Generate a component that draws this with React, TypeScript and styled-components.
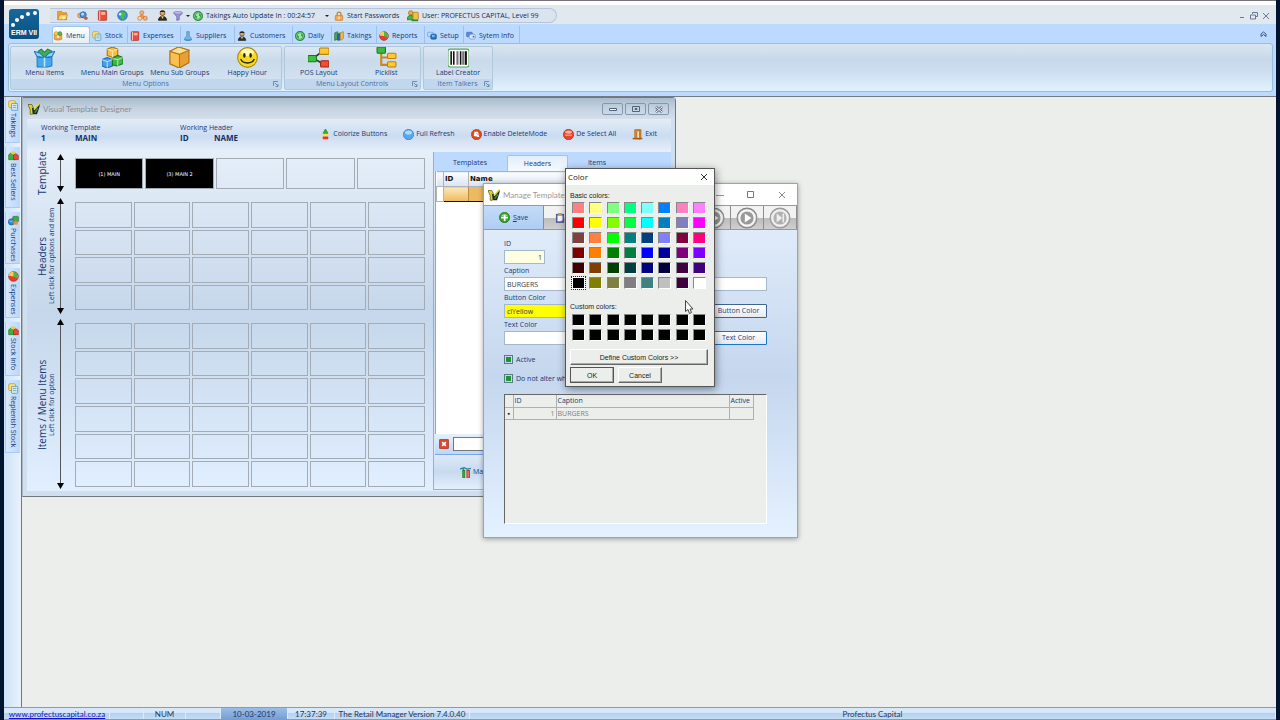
import React from 'react';
import styled, { createGlobalStyle, css } from 'styled-components';

const ui = '"Open Sans", "Noto Sans", sans-serif';
const titleFont = 'Lato, "Open Sans", sans-serif';
const dialogFont = '"Liberation Sans", Arial, sans-serif';
const navy = '#193872';

const Global = createGlobalStyle`
  *, *::before, *::after { box-sizing: border-box; }
  body { margin: 0; font: 7px/10px ${ui}; color: ${navy}; background: #eceeeb; }
  button, input { font: inherit; color: inherit; margin: 0; padding: 0; border-radius: 0; }
  button { background: none; border: 0; white-space: nowrap; }
  h1, h2, p { margin: 0; font: inherit; }
`;

/* ---------- Icons ---------- */

type IconName =
  | 'folder' | 'gears' | 'book' | 'globe' | 'people' | 'person' | 'funnel' | 'dollar' | 'lock' | 'users'
  | 'menu' | 'stock' | 'supplier' | 'takings' | 'pie' | 'setup' | 'info' | 'box' | 'cubes' | 'cube'
  | 'smile' | 'layout' | 'tree' | 'barcode' | 'sellers' | 'coins' | 'pen' | 'bottle' | 'refresh'
  | 'delete' | 'deselect' | 'exit' | 'cancel' | 'manage' | 'save' | 'clipboard' | 'play' | 'last';

const Svg = styled.svg`
  display: block;
  flex: none;
`;

const drawings: Record<IconName, React.ReactNode> = {
  folder: <><path d="M1 2h6l2 2h5v10H1z" fill="#f0a030" stroke="#c87a20" /><path d="M4 7h11l-2 7H1z" fill="#ffd870" stroke="#c88828" /><path d="M7 9l5 1-2 4" fill="#fff4d0" /></>,
  gears: <><circle cx="4.500" cy="8" r="3.500" fill="#f0a868" stroke="#b87840" /><circle cx="9" cy="7" r="4.500" fill="#4d8fd8" stroke="#235a9c" /><circle cx="8" cy="6" r="2" fill="#b9dcff" /><circle cx="13" cy="12" r="2.500" fill="#c8583c" /></>,
  book: <><rect x="2" y="1" width="12" height="14" rx="1" fill="#e8503c" stroke="#a82818" /><rect x="6" y="3" width="6" height="4" fill="#ffb0a0" /><path d="M4 1v14" stroke="#ffc8b8" strokeWidth="1.500" /></>,
  globe: <><circle cx="8" cy="8" r="7" fill="#3a8ce0" stroke="#205a9c" /><path d="M6 2l5 1 2 3-3 3 1 4-3 1-3-5-2-2zM12 8l2 0-2 4z" fill="#46c048" /><circle cx="4.500" cy="6" r="2" fill="#c0e8ff" /></>,
  people: <><circle cx="7" cy="4" r="3" fill="#f4b070" stroke="#c87838" /><path d="M3 12c0-6 8-6 8 0z" fill="#f09850" stroke="#c87030" /><circle cx="4" cy="12" r="3" fill="#ffd0a0" stroke="#c87838" /><circle cx="12" cy="12" r="3" fill="#f8b070" stroke="#c87030" /></>,
  person: <><circle cx="8" cy="4.500" r="3.500" fill="#e0a860" stroke="#4a3018" /><path d="M2 15c0-8 12-8 12 0z" fill="#303030" stroke="#181818" /><path d="M6 9l2 4 2-4" fill="#f4c830" /><path d="M4 3c1-3 7-3 8 0z" fill="#2a2018" /></>,
  funnel: <><path d="M1 3h14l-5 6v5l-4 1V9z" fill="#9f95d8" stroke="#6055a8" /><ellipse cx="8" cy="3" rx="7" ry="2" fill="#d0c8f4" stroke="#6055a8" /></>,
  dollar: <><circle cx="8" cy="8" r="7.500" fill="#28a038" stroke="#12702a" /><circle cx="8" cy="8" r="5.500" fill="none" stroke="#a0e8a8" /><path d="M10 5H7a1.500 1.500 0 0 0 0 3h2a1.500 1.500 0 0 1 0 3H6M8 4v8" stroke="#fff" strokeWidth="1.200" fill="none" /></>,
  lock: <><path d="M5 8V4c0-3 6-3 6 0v4" fill="none" stroke="#c08030" strokeWidth="2" /><rect x="2" y="7" width="12" height="8" rx="1" fill="#f4a850" stroke="#c07828" /><path d="M8 9v4" stroke="#fff0c0" strokeWidth="2" /></>,
  users: <><circle cx="5" cy="4" r="3" fill="#f0b040" stroke="#a06818" /><path d="M0 13c0-8 10-8 10 0z" fill="#48b048" stroke="#207028" /><rect x="8" y="3" width="7" height="10" rx="1" fill="#f4c040" stroke="#b07818" /><path d="M6 14h9" stroke="#308838" strokeWidth="2" /></>,
  menu: <><path d="M2 5h12v8c-3 2-9 2-12 0z" fill="#f4a840" stroke="#c07820" /><circle cx="5" cy="4" r="3" fill="#f8d060" stroke="#c08820" /><circle cx="11" cy="4" r="3" fill="#68b848" stroke="#307820" /><circle cx="8" cy="9" r="2" fill="#fff0b0" /></>,
  stock: <><rect x="1" y="1" width="10" height="10" rx="2" fill="#ffe070" stroke="#b89828" /><rect x="5" y="5" width="9" height="10" rx="1" fill="#d0e8f8" stroke="#4888b8" /><path d="M7 8h5M7 11h5" stroke="#58a858" /></>,
  supplier: <><path d="M6 1h4v7l3 3v3H3v-3l3-3z" fill="#74b4e0" stroke="#3c80b8" /><path d="M2 13c4 3 8 3 12 0" fill="none" stroke="#4a90c8" strokeWidth="2" /></>,
  takings: <><path d="M1 3l5-2v12l-5 2z" fill="#48a848" stroke="#286828" /><path d="M6 5l4-2v11l-4 1z" fill="#2868c8" stroke="#183c88" /><path d="M10 3l5-2v11l-5 3z" fill="#f0c030" stroke="#a87818" /></>,
  pie: <><circle cx="8" cy="8" r="7" fill="#e84028" stroke="#a02818" /><path d="M8 8V1a7 7 0 0 1 6 10z" fill="#50b848" /><path d="M8 8V1a7 7 0 0 0-7 6z" fill="#ffd050" /></>,
  setup: <><rect x="1" y="2" width="9" height="7" rx="1" fill="#b8dcf8" stroke="#5898d0" /><rect x="6" y="5" width="9" height="8" rx="2" fill="#2878d0" stroke="#184c98" /><path d="M8 8h4" stroke="#b8e0ff" strokeWidth="2" /></>,
  info: <><rect x="1" y="2" width="9" height="7" rx="1" fill="#5090e0" stroke="#3868b0" /><rect x="5" y="5" width="10" height="8" rx="3" fill="#dce8fc" stroke="#6888c0" /><circle cx="12" cy="9" r="1.500" fill="#3868b0" /></>,
  box: <><path d="M3 9h14v9l-4 1H3z" fill="#48a8ec" stroke="#1c78c0" /><path d="M4 4l3-2 3 3 3-3 4 2-2 6H5z" fill="#40b048" stroke="#208040" /><path d="M3 9L0 4l6 2 4 4zM17 9l3-5-6 2-4 4z" fill="#90d0fa" stroke="#1c78c0" /><path d="M10 10v9" stroke="#b8e4ff" strokeWidth="1.500" /></>,
  cubes: <><path d="M5 2l5-2 5 2v6l-5 2-5-2z" fill="#f8c040" stroke="#a87010" /><path d="M0 12l5-2 5 2v6l-5 2-5-2z" fill="#48a0e8" stroke="#1860a8" /><path d="M10 11l5-3 5 2v6l-6 2-4-1z" fill="#40b840" stroke="#187828" /><path d="M5 2l5 2 5-2M10 4v6M0 12l5 2 5-2M5 14v6M10 11l5 1 5-2M15 12v6" stroke="#fff" opacity=".6" fill="none" /></>,
  cube: <><path d="M1 4l8-4 10 3v12l-9 5-9-4z" fill="#e8a030" stroke="#a86c10" /><path d="M1 4l9 3v13l-9-4z" fill="#f8c050" stroke="#b87818" /><path d="M1 4l8-4 10 3-9 4z" fill="#ffe090" stroke="#b87818" /></>,
  smile: <><circle cx="10" cy="10" r="9.400" fill="#f8d820" stroke="#a88810" /><ellipse cx="10" cy="5" rx="6" ry="3.500" fill="#fff8b0" /><ellipse cx="7" cy="8" rx="1.200" ry="2.200" fill="#222" /><ellipse cx="13" cy="8" rx="1.200" ry="2.200" fill="#222" /><path d="M3.500 11.500c2 5 11 5 13 0" fill="none" stroke="#222" strokeWidth="1.300" /></>,
  layout: <><path d="M6 10L14 4M6 11l8 5" stroke="#303030" strokeWidth="1.500" /><rect x="0" y="8" width="8" height="6" rx="1" fill="#40c040" stroke="#187818" /><rect x="11" y="1" width="9" height="6" rx="1" fill="#ffc830" stroke="#b88010" /><rect x="12" y="13" width="8" height="6" rx="1" fill="#f05030" stroke="#a02010" /></>,
  tree: <><path d="M5 5v12h7M5 10h7" stroke="#c88820" strokeWidth="2" fill="none" /><rect x="1" y="0" width="8" height="6" rx="1" fill="#40b840" stroke="#187818" /><rect x="11" y="6" width="8" height="5" rx="1" fill="#ffc830" stroke="#b88010" /><rect x="11" y="14" width="8" height="5" rx="1" fill="#ffc830" stroke="#b88010" /></>,
  barcode: <><rect x="0" y="2" width="20" height="17" rx="2" fill="#fff" stroke="#50a858" /><path d="M3 4v13M5.500 4v13M12 4v13" stroke="#111" strokeWidth="1.500" /><path d="M9 4v13M14.500 4v13" stroke="#777" strokeWidth="2" /><path d="M17 4v13" stroke="#111" strokeWidth="2" /></>,
  sellers: <><path d="M1 7l5-4 5 4v7H1z" fill="#40b040" stroke="#208028" /><path d="M8 8l3-3 4 3v6H8z" fill="#e84830" stroke="#a82818" /><rect x="4" y="2" width="7" height="4" rx="2" fill="#f4c848" /></>,
  coins: <><circle cx="5" cy="10" r="4.500" fill="#3888d8" stroke="#205898" /><rect x="7" y="2" width="8" height="8" rx="1" fill="#48a848" stroke="#287028" /><path d="M8 9h6v5H8z" fill="#f08840" /><path d="M2 9h5" stroke="#b8dcff" /></>,
  pen: <><path d="M0 2h5l2 4-1 9H3V9z" fill="#e6d61c" stroke="#5c5810" /><path d="M5 6l4 2 4-5 3-2-1 5-3 9H7z" fill="#1e2620" /><path d="M15 1L8 9" stroke="#e8dc30" strokeWidth="2" /><path d="M13 7l-4 6" stroke="#3e8a50" strokeWidth="2" /></>,
  bottle: <><path d="M8 0l3 5v3H5V5z" fill="#30b030" stroke="#208020" /><rect x="4" y="7" width="8" height="4" fill="#ffe040" /><rect x="4" y="11" width="8" height="4" rx="1" fill="#e83820" /></>,
  refresh: <><circle cx="8" cy="8" r="7.500" fill="#58a8f0" stroke="#3478c0" /><ellipse cx="8" cy="5" rx="5" ry="3" fill="#b0dcff" /></>,
  delete: <><circle cx="8" cy="8" r="7.500" fill="#e04820" stroke="#a02c10" strokeDasharray="3 1" /><path d="M5 4l5 0 1 3 1 5-4-1-4-1z" fill="#fff" /><path d="M8 6l3 3" stroke="#e04820" /></>,
  deselect: <><circle cx="8" cy="8" r="7.500" fill="#e84430" stroke="#a82c18" /><ellipse cx="8" cy="4.500" rx="5" ry="2.500" fill="#ffb098" /><path d="M3 9h10" stroke="#ff9880" strokeWidth="2" /></>,
  exit: <><path d="M4 1h9v13H4z" fill="#e89038" stroke="#a05818" /><path d="M7 3l4-1v13l-4-2z" fill="#ffe0a0" stroke="#a05818" /><path d="M1 14h14" stroke="#a05818" strokeWidth="2" /></>,
  cancel: <><rect x=".5" y=".5" width="15" height="15" rx="2" fill="#d84830" stroke="#982818" /><path d="M5 5l6 6M11 5l-6 6" stroke="#fff" strokeWidth="2.500" /></>,
  manage: <><path d="M0 3l6-2 4 2 6-1M5 2v4M12 2v4" stroke="#2888a8" strokeWidth="2" fill="none" /><rect x="4" y="5" width="3" height="11" fill="#38b038" stroke="#187818" /><rect x="10" y="5" width="4" height="11" fill="#e07060" stroke="#a02818" /></>,
  save: <><circle cx="8" cy="8" r="7.500" fill="#38a030" stroke="#207020" /><path d="M3 6c2-4 8-4 10 0" fill="#90d878" /><path d="M7 4h2.500v3H13v2.500H9.500V13H7V9.500H3V7h4z" fill="#fff" /></>,
  clipboard: <><rect x="2" y="2" width="12" height="13" fill="#6068c0" stroke="#383c88" /><path d="M4 4h8v7l-3 2H4z" fill="#f8f8ff" /><rect x="5" y="0" width="6" height="4" fill="#c8a050" /></>,
  play: <><circle cx="10" cy="10" r="9" fill="#b2b2b2" stroke="#888" /><circle cx="10" cy="10" r="7" fill="#999" stroke="#f6f6f6" strokeWidth="2" /><path d="M8 6l6 4-6 4z" fill="#fff" /></>,
  last: <><circle cx="10" cy="10" r="9" fill="#bcbcbc" stroke="#999" /><circle cx="10" cy="10" r="7" fill="#b0b0b0" stroke="#f0f0f0" strokeWidth="2" /><path d="M7 6l5 4-5 4z" fill="#eee" /><path d="M13 6v8" stroke="#eee" strokeWidth="1.500" /></>,
};

const largeIcons: IconName[] = ['box', 'cubes', 'cube', 'smile', 'layout', 'tree', 'barcode', 'play', 'last'];

function Icon({ name, size = 10 }: { name: IconName; size?: number }) {
  const box = largeIcons.includes(name) ? 20 : 16;
  return (
    <Svg width={size} height={size} viewBox={`0 0 ${box} ${box}`} fill="none" aria-hidden="true">
      {drawings[name]}
    </Svg>
  );
}

const Caret = () => (
  <Svg width="4" height="2" viewBox="0 0 4 2" aria-hidden="true"><path d="M0 0h4L2 2z" fill="#222" /></Svg>
);

/* ---------- Frame ---------- */

const Frame = styled.div`
  min-height: 100vh;
  display: flex;
  flex-direction: column;
  border: solid #00142f;
  border-width: 0 4px 0 4px;
`;

const TopEdge = styled.div`
  height: 5px;
  background: #fff;
  border-top: 1px solid #77737a;
`;

const Header = styled.header`
  display: grid;
  grid-template-columns: 46px minmax(0, 1fr);
  grid-template-rows: 19px 19px;
  background: linear-gradient(#e1e9ee 0 19px, #bcd9ff 19px);
`;

const Logo = styled.div`
  grid-row: 1 / 3;
  align-self: center;
  margin: 0 0 0 5px;
  width: 30px;
  height: 30px;
  border-radius: 3px;
  background: linear-gradient(#17689c, #075181);
  color: #fff;
  font: bold 7px/8px ${dialogFont};
  text-align: center;
  white-space: nowrap;
  svg { width: 30px; height: 20px; }
`;

const QuickBar = styled.div`
  display: flex;
  align-items: center;
  justify-content: space-between;
  padding: 2px 6px 0 0;
`;

const Pill = styled.div`
  display: flex;
  align-items: center;
  height: 15px;
  width: 507px;
  padding-left: 7px;
  border: 1px solid #b4c6dc;
  border-left: 0;
  border-radius: 0 8px 8px 0;
  background: #d9e4ef;
  color: #172c4c;
`;

const QuickIcons = styled.div`
  display: flex;
  gap: 9px;
  align-items: center;
  width: 131px;
  button:last-child { margin-left: -4px; display: flex; align-items: center; gap: 3px; }
`;

const QuickItem = styled.button<{ $width: number }>`
  display: flex;
  align-items: center;
  gap: 3px;
  width: ${(p) => p.$width}px;
  margin-left: 5px;
  svg:last-child:not(:first-child) { margin-left: auto; }
`;

const FrameButtons = styled.div`
  display: flex;
  gap: 4px;
`;

const Tabs = styled.nav`
  display: flex;
  align-items: stretch;
  padding-left: 2px;
`;

const Tab = styled.button<{ $width: number; $active?: boolean }>`
  display: flex;
  align-items: center;
  gap: 3px;
  width: ${(p) => p.$width}px;
  margin-top: 2px;
  padding: 2px 0 0 2px;
  border-right: 1px solid #9fc0ea;
  ${(p) => p.$active && css`
    padding-left: 0;
    background: linear-gradient(#fff, #e2edf8);
    border: 1px solid #a2c4e4;
    border-bottom: 0;
    border-radius: 3px 3px 0 0;
  `}
`;

const Collapse = styled.button`
  margin: 0 9px 0 auto;
`;

const RibbonArea = styled.div`
  height: 54px;
  padding: 0 3px 4px 4px;
  background: #bcd9ff;
  border-bottom: 1px solid #747b80;
`;

const Ribbon = styled.div`
  height: 49px;
  display: flex;
  gap: 2px;
  padding: 2px 1px 1px;
  border: 1px solid #97bfdc;
  border-radius: 3px;
  background: linear-gradient(#d9e5f1, #c7d8ea 34%, #cddff0 60%, #e0f3fd);
`;

const Group = styled.section<{ $width: number }>`
  display: flex;
  flex-direction: column;
  width: ${(p) => p.$width}px;
  border: 1px solid #aec8de;
  border-radius: 2px;
  background: linear-gradient(#dde7f2, #c9daeb 34%, #d8e6f4);
`;

const GroupItems = styled.div`
  flex: 1;
  display: flex;
`;

const GroupCaption = styled.h2`
  display: flex;
  align-items: center;
  height: 10px;
  padding-right: 2px;
  background: #c0d7ee;
  color: #4a71a8;
  line-height: 10px;
  &::before { content: ''; width: 7px; }
  span { flex: 1; text-align: center; }
`;

const RibbonButton = styled.button`
  flex: 1;
  display: flex;
  flex-direction: column;
  align-items: center;
`;

/* ---------- Work area ---------- */

const Main = styled.main`
  flex: 1;
  display: flex;
`;

const Sidebar = styled.nav`
  display: flex;
  flex-direction: column;
  gap: 4px;
  width: 18px;
  padding-left: 1px;
  background: linear-gradient(90deg, #cfe2f8, #e8f2fc);
  border-right: 1px solid #777;
`;

const SideTab = styled.button<{ $height: number }>`
  display: flex;
  align-items: center;
  writing-mode: vertical-rl;
  gap: 2px;
  width: 15px;
  height: ${(p) => p.$height}px;
  padding-top: 3px;
  line-height: 15px;
  border: solid #a9caf2;
  border-width: 0 0 1px 1px;
  background: linear-gradient(90deg, #d6e8fd, #b9d7fc);
`;

const Desktop = styled.div`
  position: relative;
  flex: 1;
  min-width: 0;
  background: #eceeeb;
`;

const AppWindow = styled.section<{ $x: number; $y: number; $w: number; $h: number }>`
  position: absolute;
  left: ${(p) => p.$x}px;
  top: ${(p) => p.$y}px;
  width: ${(p) => p.$w}px;
  height: ${(p) => p.$h}px;
  display: flex;
  flex-direction: column;
`;

const Designer = styled(AppWindow)`
  padding: 0 4px 5px;
  border: 1px solid #6e767e;
  border-left: 1px solid #aab8c4;
  border-top-right-radius: 4px;
  background: #cfdfef;
`;

const DesignerTitle = styled.div`
  display: flex;
  align-items: center;
  gap: 3px;
  height: 21px;
  margin: 0 -4px;
  padding: 2px 6px 0 5px;
  background: linear-gradient(#a9bbcc, #c5d3e0 50%, #d3dfeb);
  color: #888d94;
  font: 8px/10px ${titleFont};
`;

const TitleButtons = styled.div`
  display: flex;
  gap: 2px;
  margin-left: auto;
`;

const TitleButton = styled.button`
  display: grid;
  place-items: center;
  width: 21px;
  height: 12px;
  border: 1px solid #8497ad;
  border-radius: 2px;
`;

const DesignerHead = styled.div`
  display: flex;
  align-items: center;
  height: 32px;
  padding: 0 14px;
  background: linear-gradient(#e3ecf7, #cbdcf1 55%, #e4edf8);
`;

const WorkingInfo = styled.dl`
  display: grid;
  grid-template-columns: 34px 105px;
  margin: 0 0 3px;
  dt { grid-column: 1 / 3; }
  dd { margin: 0; font-weight: bold; font-size: 8px; color: #12306c; }
`;

const HeadActions = styled.div`
  display: flex;
  gap: 16px;
  margin-left: auto;
`;

const IconButton = styled.button`
  display: flex;
  align-items: center;
  gap: 2px;
`;

const DesignerBody = styled.div`
  flex: 1;
  display: flex;
  justify-content: space-between;
  background: linear-gradient(#e6eff9, #c6d7eb 48%, #e1efff);
`;

const Boards = styled.div`
  display: flex;
  flex-direction: column;
  gap: 5px;
  width: 399px;
  padding: 4px 0 0 10px;
`;

const Board = styled.div<{ $height: number }>`
  display: grid;
  grid-template-columns: 19px 17px 350px;
  grid-template-rows: minmax(0, 1fr);
  column-gap: 1px;
  height: ${(p) => p.$height}px;
`;

const BoardLabel = styled.div`
  writing-mode: vertical-rl;
  transform: rotate(180deg);
  display: flex;
  flex-direction: column;
  align-items: center;
  white-space: nowrap;
  line-height: 8px;
  strong { font: 10px/11px ${ui}; }
`;

const Cells = styled.div<{ $cols: number }>`
  display: grid;
  grid-template-columns: repeat(${(p) => p.$cols}, 1fr);
  grid-auto-rows: 1fr;
  gap: 2px;
  padding: 4px 0;
`;

const Cell = styled.button<{ $filled?: boolean }>`
  border: 1px solid #a3abb4;
  ${(p) => p.$filled && css`
    background: #000;
    color: #fff;
    font: 5px/8px "DejaVu Sans", sans-serif;
  `}
`;

const SidePanel = styled.div`
  display: flex;
  flex-direction: column;
  width: 238px;
  margin: 2px 0 1px;
  border: solid #85b2ec;
  border-width: 0 0 1px 1px;
`;

const PanelTabs = styled.div`
  display: flex;
  align-items: flex-end;
  gap: 4px;
  height: 19px;
  padding-left: 3px;
  background: #bcd9ff;
`;

const PanelTab = styled.button<{ $width: number; $active?: boolean }>`
  width: ${(p) => p.$width}px;
  height: 16px;
  ${(p) => p.$active && css`
    background: linear-gradient(#e2eefb, #f5faff);
    border: 1px solid #9ec3ee;
    border-bottom: 0;
    border-radius: 2px 2px 0 0;
  `}
`;

const ListBox = styled.div`
  flex: 1;
  margin-left: 1px;
  border-left: 1px solid #8ea9c8;
  background: #fff;
`;

const List = styled.table`
  width: 100%;
  table-layout: fixed;
  border-collapse: collapse;
  font: bold 7px/14px "DejaVu Sans", sans-serif;
  color: #111;
  th {
    height: 15px;
    padding: 0 0 0 1px;
    text-align: left;
    border: 1px solid #aab4c0;
    border-left: 0;
    background: linear-gradient(#fafcff, #dce4ee);
  }
  td { height: 15px; padding: 0; border: 1px solid #b4b4b4; }
  td + td { border: 1px solid #111; border-right: 1px solid #b78b40; background: linear-gradient(#fbe8b8, #efb95e); }
  td + td + td { border-right: 0; border-left: 0; background: #ecba60; }
`;

const SearchRow = styled.div`
  display: flex;
  align-items: center;
  gap: 4px;
  height: 21px;
  margin-left: 1px;
  padding-left: 4px;
  background: linear-gradient(#e4effb, #bcd7f6);
  border-bottom: 1px solid #78aae8;
  input { flex: 1; min-width: 0; height: 14px; border: 1px solid #777; background: #fff; }
`;

const PanelFoot = styled.div`
  display: flex;
  height: 34px;
  padding-left: 26px;
  background: linear-gradient(#dde9f7, #c8daf0 50%, #e2effd);
`;

/* ---------- Manage window ---------- */

const Manager = styled(AppWindow)`
  border: 1px solid #98a4b0;
  box-shadow: 0 1px 5px rgba(0, 0, 0, .35);
  background: #fff;
`;

const ManagerTitle = styled.div`
  display: flex;
  align-items: center;
  justify-content: space-between;
  height: 21px;
  padding: 0 11px 0 4px;
  color: #999;
  font: 8px/10px ${titleFont};
  h2 { display: flex; align-items: center; gap: 3px; }
`;

const WindowControls = styled.div`
  display: flex;
  gap: 23px;
`;

const Toolbar = styled.div`
  display: flex;
  height: 25px;
  border: solid #999;
  border-width: 1px 0;
  background: linear-gradient(#f2f2f2 50%, #bbb 50%, #cfcfcf);
`;

const ToolButton = styled.button<{ $primary?: boolean }>`
  display: flex;
  align-items: center;
  justify-content: center;
  gap: 3px;
  width: ${(p) => (p.$primary ? 60 : 33)}px;
  border-right: 1px solid #8c8c8c;
  background: ${(p) => (p.$primary ? 'linear-gradient(#c5dbf7, #aecdf4)' : 'none')};
  u { text-underline-offset: 1px; }
`;

const ToolSpacer = styled.div`
  flex: 1;
  border-right: 1px solid #8c8c8c;
`;

const Form = styled.form`
  flex: 1;
  display: flex;
  flex-direction: column;
  padding: 8px 30px 13px 20px;
  background: linear-gradient(#dfebf9, #c5d7ee 48%, #e4f1ff);
`;

const Field = styled.div`
  display: grid;
  grid-template-columns: 206px 57px;
  grid-template-rows: 12px 15px;
  align-items: start;
  label { grid-column: 1 / 3; line-height: 12px; }
`;

const TextBox = styled.input<{ $kind?: 'id' | 'wide' | 'yellow' }>`
  height: 14px;
  width: ${(p) => (p.$kind === 'id' ? '41px' : '100%')};
  grid-column: ${(p) => (p.$kind === 'wide' ? '1 / 3' : 'auto')};
  padding: 0 2px;
  border: 1px solid #a4b8cc;
  background: ${(p) => (p.$kind === 'id' ? '#ffffe1' : p.$kind === 'yellow' ? '#ffff00' : '#fff')};
  text-align: ${(p) => (p.$kind === 'id' ? 'right' : 'left')};
  color: #333a48;
`;

const PickButton = styled.button<{ $focus?: boolean }>`
  height: 14px;
  border: 1px solid ${(p) => (p.$focus ? '#1778c8' : '#3d6494')};
  border-radius: 1px;
  background: linear-gradient(#fff, #e5eaf0);
  color: #1f3f7c;
`;

const Checks = styled.div`
  margin: 4px 0 6px;
`;

const Check = styled.label`
  display: flex;
  align-items: center;
  gap: 3px;
  height: 19px;
  input {
    appearance: none;
    width: 9px;
    height: 9px;
    border: 1px solid #577a8c;
    padding: 1px;
    background: #fff;
  }
  input:checked { background: #1f9430 content-box; }
`;

const RecordBox = styled.div`
  flex: 1;
  border: solid #666;
  border-width: 1px 0 0 1px;
  border-right: 1px solid #fff;
  border-bottom: 1px solid #fff;
  background: #eceeeb;
`;

const Records = styled.table`
  width: 248px;
  table-layout: fixed;
  border-collapse: collapse;
  color: #808080;
  th, td {
    height: 12px;
    padding: 0 1px;
    border: solid #b0b0b0;
    border-width: 0 1px 1px 0;
    line-height: 11px;
    text-align: left;
    font-weight: normal;
  }
  th { color: ${navy}; }
  tr > :first-child { padding: 0; text-align: center; color: #222; }
  td:nth-child(2) { text-align: right; }
`;

/* ---------- Colour dialog ---------- */

const ColorWindow = styled(AppWindow)`
  border: 1px solid #555;
  box-shadow: 1px 2px 8px rgba(0, 0, 0, .45);
  background: #eceeeb;
  color: #222;
  font: 7px/11px ${dialogFont};
`;

const ColorTitle = styled.div`
  display: flex;
  align-items: center;
  justify-content: space-between;
  height: 16px;
  padding: 0 6px 0 2px;
  background: #fff;
  font: 8px/12px ${ui};
`;

const ColorBody = styled.div`
  display: flex;
  flex-direction: column;
  padding: 5px 6px 0 4px;
`;

const Swatches = styled.div<{ $height: number }>`
  display: grid;
  grid-template-columns: repeat(8, 1fr);
  grid-auto-rows: 1fr;
  place-items: center;
  height: ${(p) => p.$height}px;
  margin-bottom: ${(p) => (p.$height > 50 ? 11 : 7)}px;
`;

const Swatch = styled.button<{ $color: string; $selected?: boolean }>`
  width: 13px;
  height: 12px;
  border: 1px solid;
  border-color: #888 #fff #fff #888;
  background: ${(p) => p.$color};
  ${(p) => p.$selected && css`border-color: #fff; outline: 1px dotted #222;`}
`;

const DialogButton = styled.button<{ $default?: boolean }>`
  height: 16px;
  border: 1px solid;
  border-color: ${(p) => (p.$default ? '#555' : '#fff #666 #666 #fff')};
  box-shadow: inset -1px -1px #aaa;
`;

const DialogActions = styled.div`
  display: grid;
  grid-template-columns: 44px 44px;
  gap: 4px;
  margin-top: 2px;
`;

const Pointer = styled.svg`
  position: absolute;
  left: 663px;
  top: 203px;
`;

/* ---------- Status bar ---------- */

const StatusBar = styled.footer`
  display: flex;
  height: 13px;
  padding-left: 1px;
  border: solid #7a9fc5;
  border-width: 1px 0;
  background: linear-gradient(#d9e8f9 40%, #b6d2f0 50%, #c4dcf6);
  font: 8px/12px ${titleFont};
  color: #22375e;
`;

const StatusCell = styled.div<{ $width?: number; $active?: boolean }>`
  ${(p) => (p.$width ? css`width: ${p.$width}px;` : css`flex: 1;`)}
  text-align: center;
  border-right: 1px solid #dcebfb;
  white-space: nowrap;
  ${(p) => p.$active && css`background: linear-gradient(#9cbde8, #779fd6);`}
  a { color: #1414c8; }
`;

/* ---------- Data ---------- */

const tabs: [string, IconName, number][] = [
  ['Menu', 'menu', 38], ['Stock', 'stock', 38], ['Expenses', 'book', 53], ['Suppliers', 'supplier', 54],
  ['Customers', 'person', 58], ['Daily', 'dollar', 39], ['Takings', 'takings', 45], ['Reports', 'pie', 48],
  ['Setup', 'setup', 39], ['Sytem Info', 'info', 56],
];

const groups: { caption: string; width: number; items: [string, IconName][] }[] = [
  { caption: 'Menu Options', width: 272, items: [['Menu Items', 'box'], ['Menu Main Groups', 'cubes'], ['Menu Sub Groups', 'cube'], ['Happy Hour', 'smile']] },
  { caption: 'Menu Layout Controls', width: 137, items: [['POS Layout', 'layout'], ['Picklist', 'tree']] },
  { caption: 'Item Talkers', width: 70, items: [['Label Creator', 'barcode']] },
];

const sideTabs: [string, IconName, number][] = [
  ['Takings', 'stock', 46], ['Best Sellers', 'sellers', 61], ['Purchases', 'coins', 52],
  ['Expenses', 'pie', 50], ['Stock Info', 'sellers', 54], ['Replenish Stock', 'stock', 73],
];

const actions: [string, IconName][] = [
  ['Colorize Buttons', 'bottle'], ['Full Refresh', 'refresh'], ['Enable DeleteMode', 'delete'],
  ['De Select All', 'deselect'], ['Exit', 'exit'],
];

const palette = [
  '#ff8080', '#ffff80', '#80ff80', '#00ff80', '#80ffff', '#0080ff', '#ff80c0', '#ff80ff',
  '#ff0000', '#ffff00', '#80ff00', '#00ff40', '#00ffff', '#0080c0', '#8080c0', '#ff00ff',
  '#804040', '#ff8040', '#00ff00', '#008080', '#004080', '#8080ff', '#800040', '#ff0080',
  '#800000', '#ff8000', '#008000', '#008040', '#0000ff', '#0000a0', '#800080', '#8000ff',
  '#400000', '#804000', '#004000', '#004040', '#000080', '#000040', '#400040', '#400080',
  '#000000', '#808000', '#808040', '#808080', '#408080', '#c0c0c0', '#400040', '#ffffff',
];

const cellsOf = (n: number) => Array.from({ length: n }, (_, i) => i);

function Arrow({ height }: { height: number }) {
  return (
    <Svg width="7" height={height} viewBox={`0 0 7 ${height}`} aria-hidden="true">
      <path d={`M3.500 5v${height - 10}`} stroke="#555" />
      <path d={`M3.500 0L7 6H0zM3.500 ${height}L7 ${height - 6}H0z`} fill="#000" />
    </Svg>
  );
}

function Cross({ size = 8, color = '#333' }: { size?: number; color?: string }) {
  return <Svg width={size} height={size} viewBox="0 0 8 8" aria-hidden="true"><path d="M1 1l6 6M7 1L1 7" stroke={color} /></Svg>;
}

function TopArea() {
  const icons: IconName[] = ['folder', 'gears', 'book', 'globe', 'people', 'person'];
  return (
    <>
      <TopEdge />
      <Header>
        <Logo>
          <Svg viewBox="0 0 30 20" fill="#fff" aria-hidden="true">
            <circle cx="4" cy="16" r="2" /><circle cx="8" cy="11" r="2" /><circle cx="13" cy="8" r="2" />
            <circle cx="19" cy="5" r="2" /><circle cx="26" cy="4" r="2" />
          </Svg>
          ERM VII
        </Logo>
        <QuickBar>
          <Pill>
            <QuickIcons>
              {icons.map((n) => <button key={n} aria-label={n}><Icon name={n} size={11} /></button>)}
              <button aria-label="Filter"><Icon name="funnel" /><Caret /></button>
            </QuickIcons>
            <QuickItem $width={136}><Icon name="dollar" />Takings Auto Update In : 00:24:57<Caret /></QuickItem>
            <QuickItem $width={68}><Icon name="lock" />Start Passwords</QuickItem>
            <QuickItem $width={135}><Icon name="users" size={12} />User: PROFECTUS CAPITAL, Level 99</QuickItem>
          </Pill>
          <FrameButtons>
            <button aria-label="Minimize"><Svg width="8" height="8" viewBox="0 0 8 8"><path d="M2 5.500h4" stroke="#667a94" /></Svg></button>
            <button aria-label="Restore"><Svg width="8" height="8" viewBox="0 0 8 8" fill="none" stroke="#667a94"><path d="M2.500 2V.5h5v4H6M.5 3h5v4h-5z" /></Svg></button>
            <button aria-label="Close"><Cross color="#667a94" /></button>
          </FrameButtons>
        </QuickBar>
        <Tabs>
          {tabs.map(([label, icon, width], i) => (
            <Tab key={label} $width={width} $active={i === 0}><Icon name={icon} />{label}</Tab>
          ))}
          <Collapse aria-label="Collapse ribbon">
            <Svg width="7" height="6" viewBox="0 0 7 6" fill="none" stroke="#405878"><path d="M1 3l2.500-2L6 3v2.500L3.500 3.500 1 5.500z" /></Svg>
          </Collapse>
        </Tabs>
      </Header>
      <RibbonArea>
        <Ribbon>
          {groups.map((g) => (
            <Group key={g.caption} $width={g.width}>
              <GroupItems>
                {g.items.map(([label, icon]) => (
                  <RibbonButton key={label}><Icon name={icon} size={21} />{label}</RibbonButton>
                ))}
              </GroupItems>
              <GroupCaption>
                <span>{g.caption}</span>
                <Svg width="6" height="6" viewBox="0 0 6 6" fill="none" stroke="#6c8cb4"><path d="M.5 5V.5H5M2 2l3 3M5 3v2.500H2.500" /></Svg>
              </GroupCaption>
            </Group>
          ))}
        </Ribbon>
      </RibbonArea>
    </>
  );
}

function DesignerWindow() {
  return (
    <Designer $x={0} $y={0} $w={654} $h={400}>
      <DesignerTitle>
        <Icon name="pen" size={12} />
        <h1>Visual Template Designer</h1>
        <TitleButtons>
          <TitleButton aria-label="Minimize"><Svg width="8" height="5" viewBox="0 0 8 5"><path d="M.5 1.500h7v2h-7z" fill="#fff" stroke="#53657c" /></Svg></TitleButton>
          <TitleButton aria-label="Maximize"><Svg width="8" height="6" viewBox="0 0 8 6" fill="none" stroke="#53657c"><path d="M.5.5h7v5h-7zM3 2.500h2v1H3z" /></Svg></TitleButton>
          <TitleButton aria-label="Close"><Svg width="8" height="7" viewBox="0 0 8 7"><path d="M1 1l6 5M7 1L1 6" stroke="#53657c" strokeWidth="2.500" /><path d="M1 1l6 5M7 1L1 6" stroke="#fff" /></Svg></TitleButton>
        </TitleButtons>
      </DesignerTitle>
      <DesignerHead>
        <WorkingInfo><dt>Working Template</dt><dd>1</dd><dd>MAIN</dd></WorkingInfo>
        <WorkingInfo><dt>Working Header</dt><dd>ID</dd><dd>NAME</dd></WorkingInfo>
        <HeadActions>
          {actions.map(([label, icon]) => <IconButton key={label}><Icon name={icon} size={11} />{label}</IconButton>)}
        </HeadActions>
      </DesignerHead>
      <DesignerBody>
        <Boards>
          <Board $height={39}>
            <BoardLabel><strong>Template</strong></BoardLabel>
            <Arrow height={38} />
            <Cells $cols={5}>
              <Cell $filled>(1) MAIN</Cell>
              <Cell $filled>(3) MAIN 2</Cell>
              {cellsOf(3).map((i) => <Cell key={i} aria-label={`Template slot ${i + 3}`} />)}
            </Cells>
          </Board>
          <Board $height={116}>
            <BoardLabel><strong>Headers</strong>Left click for options and item</BoardLabel>
            <Arrow height={116} />
            <Cells $cols={6}>{cellsOf(24).map((i) => <Cell key={i} aria-label={`Header slot ${i + 1}`} />)}</Cells>
          </Board>
          <Board $height={172}>
            <BoardLabel><strong>Items / Menu Items</strong>Left click for option</BoardLabel>
            <Arrow height={170} />
            <Cells $cols={6}>{cellsOf(36).map((i) => <Cell key={i} aria-label={`Item slot ${i + 1}`} />)}</Cells>
          </Board>
        </Boards>
        <SidePanel>
          <PanelTabs>
            <PanelTab $width={66}>Templates</PanelTab>
            <PanelTab $width={61} $active>Headers</PanelTab>
            <PanelTab $width={50}>Items</PanelTab>
          </PanelTabs>
          <ListBox>
            <List>
              <colgroup><col width="7" /><col width="25" /><col /></colgroup>
              <thead><tr><th aria-label="Marker" /><th>ID</th><th>Name</th></tr></thead>
              <tbody><tr><td /><td /><td /></tr></tbody>
            </List>
          </ListBox>
          <SearchRow>
            <button aria-label="Clear search"><Icon name="cancel" /></button>
            <input aria-label="Search" />
          </SearchRow>
          <PanelFoot><IconButton><Icon name="manage" size={11} />Ma</IconButton></PanelFoot>
        </SidePanel>
      </DesignerBody>
    </Designer>
  );
}

function ManagerWindow() {
  return (
    <Manager $x={461} $y={86} $w={315} $h={355}>
      <ManagerTitle>
        <h2><Icon name="pen" size={12} />Manage Template</h2>
        <WindowControls>
          <button aria-label="Minimize"><Svg width="8" height="8" viewBox="0 0 8 8"><path d="M0 4.500h8" stroke="#999" /></Svg></button>
          <button aria-label="Maximize"><Svg width="8" height="8" viewBox="0 0 8 8"><path d="M.5.5h6v6h-6z" fill="none" stroke="#777" /></Svg></button>
          <button aria-label="Close"><Cross color="#888" /></button>
        </WindowControls>
      </ManagerTitle>
      <Toolbar>
        <ToolButton $primary><Icon name="save" size={11} /><span><u>S</u>ave</span></ToolButton>
        <ToolButton aria-label="Paste"><Icon name="clipboard" /></ToolButton>
        <ToolSpacer />
        <ToolButton aria-label="Previous"><Icon name="play" size={22} /></ToolButton>
        <ToolButton aria-label="Next"><Icon name="play" size={22} /></ToolButton>
        <ToolButton aria-label="Last"><Icon name="last" size={22} /></ToolButton>
      </Toolbar>
      <Form onSubmit={(e) => e.preventDefault()}>
        <Field><label htmlFor="rec-id">ID</label><TextBox id="rec-id" $kind="id" defaultValue="1" /></Field>
        <Field><label htmlFor="rec-caption">Caption</label><TextBox id="rec-caption" $kind="wide" defaultValue="BURGERS" /></Field>
        <Field>
          <label htmlFor="rec-button">Button Color</label>
          <TextBox id="rec-button" $kind="yellow" defaultValue="clYellow" />
          <PickButton type="button">Button Color</PickButton>
        </Field>
        <Field>
          <label htmlFor="rec-text">Text Color</label>
          <TextBox id="rec-text" />
          <PickButton type="button" $focus>Text Color</PickButton>
        </Field>
        <Checks>
          <Check><input type="checkbox" defaultChecked />Active</Check>
          <Check><input type="checkbox" defaultChecked />Do not alter wh</Check>
        </Checks>
        <RecordBox>
          <Records>
            <colgroup><col width="8" /><col width="43" /><col width="173" /><col width="24" /></colgroup>
            <thead><tr><th aria-label="Marker" /><th>ID</th><th>Caption</th><th>Active</th></tr></thead>
            <tbody><tr><td>▪</td><td>1</td><td>BURGERS</td><td /></tr></tbody>
          </Records>
        </RecordBox>
      </Form>
    </Manager>
  );
}

function ColorDialog() {
  return (
    <ColorWindow $x={543} $y={71} $w={150} $h={219} role="dialog" aria-label="Color">
      <ColorTitle><h2>Color</h2><button aria-label="Close"><Cross /></button></ColorTitle>
      <ColorBody>
        <p>Basic colors:</p>
        <Swatches $height={89}>
          {palette.map((c, i) => <Swatch key={i} $color={c} $selected={i === 40} aria-label={c} />)}
        </Swatches>
        <p>Custom colors:</p>
        <Swatches $height={30}>
          {cellsOf(16).map((i) => <Swatch key={i} $color="#000" aria-label={`Custom color ${i + 1}`} />)}
        </Swatches>
        <DialogButton>Define Custom Colors &gt;&gt;</DialogButton>
        <DialogActions>
          <DialogButton $default>OK</DialogButton>
          <DialogButton>Cancel</DialogButton>
        </DialogActions>
      </ColorBody>
    </ColorWindow>
  );
}

export default function App() {
  return (
    <>
      <Global />
      <Frame>
        <TopArea />
        <Main>
          <Sidebar>
            {sideTabs.map(([label, icon, height]) => (
              <SideTab key={label} $height={height}><Icon name={icon} size={11} />{label}</SideTab>
            ))}
          </Sidebar>
          <Desktop>
            <DesignerWindow />
            <ManagerWindow />
            <ColorDialog />
            <Pointer width="9" height="14" viewBox="0 0 9 14" aria-hidden="true">
              <path d="M.5.5v11l2.500-2 1.500 4 2-1-1.500-3.500h3z" fill="#fff" stroke="#444" />
            </Pointer>
          </Desktop>
        </Main>
        <StatusBar>
          <StatusCell $width={105}><a href="#site">www.profectuscapital.co.za</a></StatusCell>
          <StatusCell $width={34} />
          <StatusCell $width={42}>NUM</StatusCell>
          <StatusCell $width={35} />
          <StatusCell $width={67} $active>10-03-2019</StatusCell>
          <StatusCell $width={47}>17:37:39</StatusCell>
          <StatusCell $width={135}>The Retail Manager Version 7.4.0.40</StatusCell>
          <StatusCell>Profectus Capital</StatusCell>
        </StatusBar>
      </Frame>
    </>
  );
}
